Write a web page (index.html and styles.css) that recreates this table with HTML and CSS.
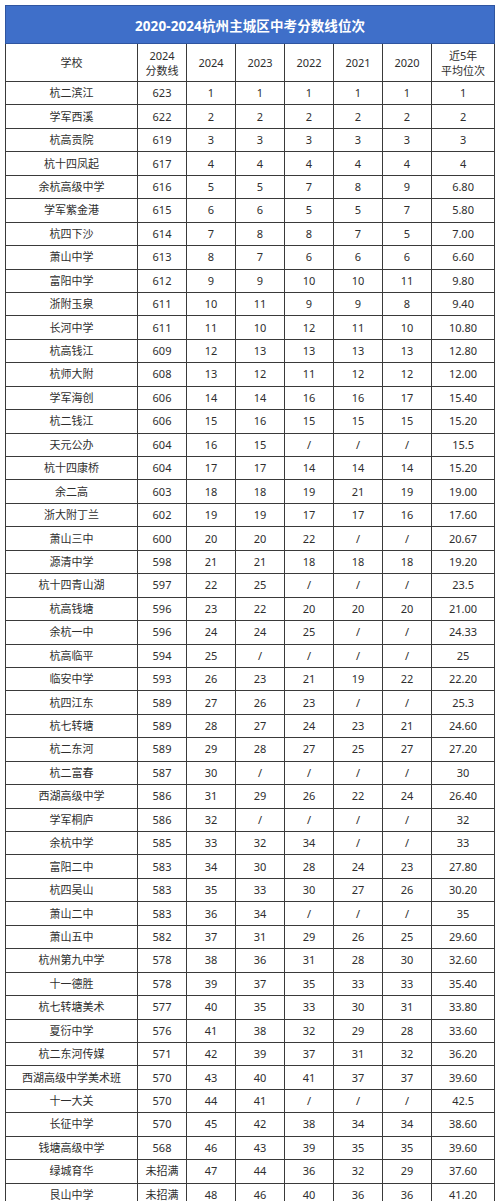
FILE: index.html
```html
<!DOCTYPE html>
<html lang="zh-CN">
<head>
<meta charset="utf-8">
<title>2020-2024杭州主城区中考分数线位次</title>
<link rel="stylesheet" href="styles.css">
</head>
<body>
<div class="sheet">
<table class="rank">
<colgroup>
<col class="c-school"><col class="c-score"><col class="c-y"><col class="c-y"><col class="c-y"><col class="c-y"><col class="c-y"><col class="c-avg">
</colgroup>
<thead>
<tr class="title-row"><th colspan="8">2020-2024杭州主城区中考分数线位次</th></tr>
<tr class="head-row"><th>学校</th><th>2024<br>分数线</th><th>2024</th><th>2023</th><th>2022</th><th>2021</th><th>2020</th><th>近5年<br>平均位次</th></tr>
</thead>
<tbody>
<tr><td>杭二滨江</td><td>623</td><td>1</td><td>1</td><td>1</td><td>1</td><td>1</td><td>1</td></tr>
<tr><td>学军西溪</td><td>622</td><td>2</td><td>2</td><td>2</td><td>2</td><td>2</td><td>2</td></tr>
<tr><td>杭高贡院</td><td>619</td><td>3</td><td>3</td><td>3</td><td>3</td><td>3</td><td>3</td></tr>
<tr><td>杭十四凤起</td><td>617</td><td>4</td><td>4</td><td>4</td><td>4</td><td>4</td><td>4</td></tr>
<tr><td>余杭高级中学</td><td>616</td><td>5</td><td>5</td><td>7</td><td>8</td><td>9</td><td>6.80</td></tr>
<tr><td>学军紫金港</td><td>615</td><td>6</td><td>6</td><td>5</td><td>5</td><td>7</td><td>5.80</td></tr>
<tr><td>杭四下沙</td><td>614</td><td>7</td><td>8</td><td>8</td><td>7</td><td>5</td><td>7.00</td></tr>
<tr><td>萧山中学</td><td>613</td><td>8</td><td>7</td><td>6</td><td>6</td><td>6</td><td>6.60</td></tr>
<tr><td>富阳中学</td><td>612</td><td>9</td><td>9</td><td>10</td><td>10</td><td>11</td><td>9.80</td></tr>
<tr><td>浙附玉泉</td><td>611</td><td>10</td><td>11</td><td>9</td><td>9</td><td>8</td><td>9.40</td></tr>
<tr><td>长河中学</td><td>611</td><td>11</td><td>10</td><td>12</td><td>11</td><td>10</td><td>10.80</td></tr>
<tr><td>杭高钱江</td><td>609</td><td>12</td><td>13</td><td>13</td><td>13</td><td>13</td><td>12.80</td></tr>
<tr><td>杭师大附</td><td>608</td><td>13</td><td>12</td><td>11</td><td>12</td><td>12</td><td>12.00</td></tr>
<tr><td>学军海创</td><td>606</td><td>14</td><td>14</td><td>16</td><td>16</td><td>17</td><td>15.40</td></tr>
<tr><td>杭二钱江</td><td>606</td><td>15</td><td>16</td><td>15</td><td>15</td><td>15</td><td>15.20</td></tr>
<tr><td>天元公办</td><td>604</td><td>16</td><td>15</td><td>/</td><td>/</td><td>/</td><td>15.5</td></tr>
<tr><td>杭十四康桥</td><td>604</td><td>17</td><td>17</td><td>14</td><td>14</td><td>14</td><td>15.20</td></tr>
<tr><td>余二高</td><td>603</td><td>18</td><td>18</td><td>19</td><td>21</td><td>19</td><td>19.00</td></tr>
<tr><td>浙大附丁兰</td><td>602</td><td>19</td><td>19</td><td>17</td><td>17</td><td>16</td><td>17.60</td></tr>
<tr><td>萧山三中</td><td>600</td><td>20</td><td>20</td><td>22</td><td>/</td><td>/</td><td>20.67</td></tr>
<tr><td>源清中学</td><td>598</td><td>21</td><td>21</td><td>18</td><td>18</td><td>18</td><td>19.20</td></tr>
<tr><td>杭十四青山湖</td><td>597</td><td>22</td><td>25</td><td>/</td><td>/</td><td>/</td><td>23.5</td></tr>
<tr><td>杭高钱塘</td><td>596</td><td>23</td><td>22</td><td>20</td><td>20</td><td>20</td><td>21.00</td></tr>
<tr><td>余杭一中</td><td>596</td><td>24</td><td>24</td><td>25</td><td>/</td><td>/</td><td>24.33</td></tr>
<tr><td>杭高临平</td><td>594</td><td>25</td><td>/</td><td>/</td><td>/</td><td>/</td><td>25</td></tr>
<tr><td>临安中学</td><td>593</td><td>26</td><td>23</td><td>21</td><td>19</td><td>22</td><td>22.20</td></tr>
<tr><td>杭四江东</td><td>589</td><td>27</td><td>26</td><td>23</td><td>/</td><td>/</td><td>25.3</td></tr>
<tr><td>杭七转塘</td><td>589</td><td>28</td><td>27</td><td>24</td><td>23</td><td>21</td><td>24.60</td></tr>
<tr><td>杭二东河</td><td>589</td><td>29</td><td>28</td><td>27</td><td>25</td><td>27</td><td>27.20</td></tr>
<tr><td>杭二富春</td><td>587</td><td>30</td><td>/</td><td>/</td><td>/</td><td>/</td><td>30</td></tr>
<tr><td>西湖高级中学</td><td>586</td><td>31</td><td>29</td><td>26</td><td>22</td><td>24</td><td>26.40</td></tr>
<tr><td>学军桐庐</td><td>586</td><td>32</td><td>/</td><td>/</td><td>/</td><td>/</td><td>32</td></tr>
<tr><td>余杭中学</td><td>585</td><td>33</td><td>32</td><td>34</td><td>/</td><td>/</td><td>33</td></tr>
<tr><td>富阳二中</td><td>583</td><td>34</td><td>30</td><td>28</td><td>24</td><td>23</td><td>27.80</td></tr>
<tr><td>杭四吴山</td><td>583</td><td>35</td><td>33</td><td>30</td><td>27</td><td>26</td><td>30.20</td></tr>
<tr><td>萧山二中</td><td>583</td><td>36</td><td>34</td><td>/</td><td>/</td><td>/</td><td>35</td></tr>
<tr><td>萧山五中</td><td>582</td><td>37</td><td>31</td><td>29</td><td>26</td><td>25</td><td>29.60</td></tr>
<tr><td>杭州第九中学</td><td>578</td><td>38</td><td>36</td><td>31</td><td>28</td><td>30</td><td>32.60</td></tr>
<tr><td>十一德胜</td><td>578</td><td>39</td><td>37</td><td>35</td><td>33</td><td>33</td><td>35.40</td></tr>
<tr><td>杭七转塘美术</td><td>577</td><td>40</td><td>35</td><td>33</td><td>30</td><td>31</td><td>33.80</td></tr>
<tr><td>夏衍中学</td><td>576</td><td>41</td><td>38</td><td>32</td><td>29</td><td>28</td><td>33.60</td></tr>
<tr><td>杭二东河传媒</td><td>571</td><td>42</td><td>39</td><td>37</td><td>31</td><td>32</td><td>36.20</td></tr>
<tr><td>西湖高级中学美术班</td><td>570</td><td>43</td><td>40</td><td>41</td><td>37</td><td>37</td><td>39.60</td></tr>
<tr><td>十一大关</td><td>570</td><td>44</td><td>41</td><td>/</td><td>/</td><td>/</td><td>42.5</td></tr>
<tr><td>长征中学</td><td>570</td><td>45</td><td>42</td><td>38</td><td>34</td><td>34</td><td>38.60</td></tr>
<tr><td>钱塘高级中学</td><td>568</td><td>46</td><td>43</td><td>39</td><td>35</td><td>35</td><td>39.60</td></tr>
<tr><td>绿城育华</td><td>未招满</td><td>47</td><td>44</td><td>36</td><td>32</td><td>29</td><td>37.60</td></tr>
<tr><td>艮山中学</td><td>未招满</td><td>48</td><td>46</td><td>40</td><td>36</td><td>36</td><td>41.20</td></tr>
</tbody>
</table>
</div>
</body>
</html>
```

FILE: styles.css
```css
html, body {
  margin: 0;
  padding: 0;
  background: #ffffff;
}

body {
  font-family: "Noto Sans", "Noto Sans CJK SC", sans-serif;
  color: #2e2e2e;
}

.sheet {
  padding: 5px 0 0 5px;
}

.rank {
  border-collapse: collapse;
  table-layout: fixed;
  width: 489px;
  font-size: 11px;
}

.c-school { width: 132px; }
.c-score { width: 49px; }
.c-y { width: 49px; }
.c-avg { width: 63px; }

.rank th,
.rank td {
  border: 1px solid #3a3a3a;
  text-align: center;
  vertical-align: middle;
  padding: 0;
  white-space: nowrap;
}

.title-row th {
  height: 37px;
  background: #3f6fc9;
  color: #ffffff;
  font-size: 13.5px;
  font-weight: 700;
  letter-spacing: 0.1px;
  border-color: #2f55a0;
}

.head-row th {
  height: 37px;
  font-weight: 400;
  line-height: 15px;
  font-size: 11px;
}

.rank tbody td {
  height: 22.45px;
  line-height: 14px;
}
```
